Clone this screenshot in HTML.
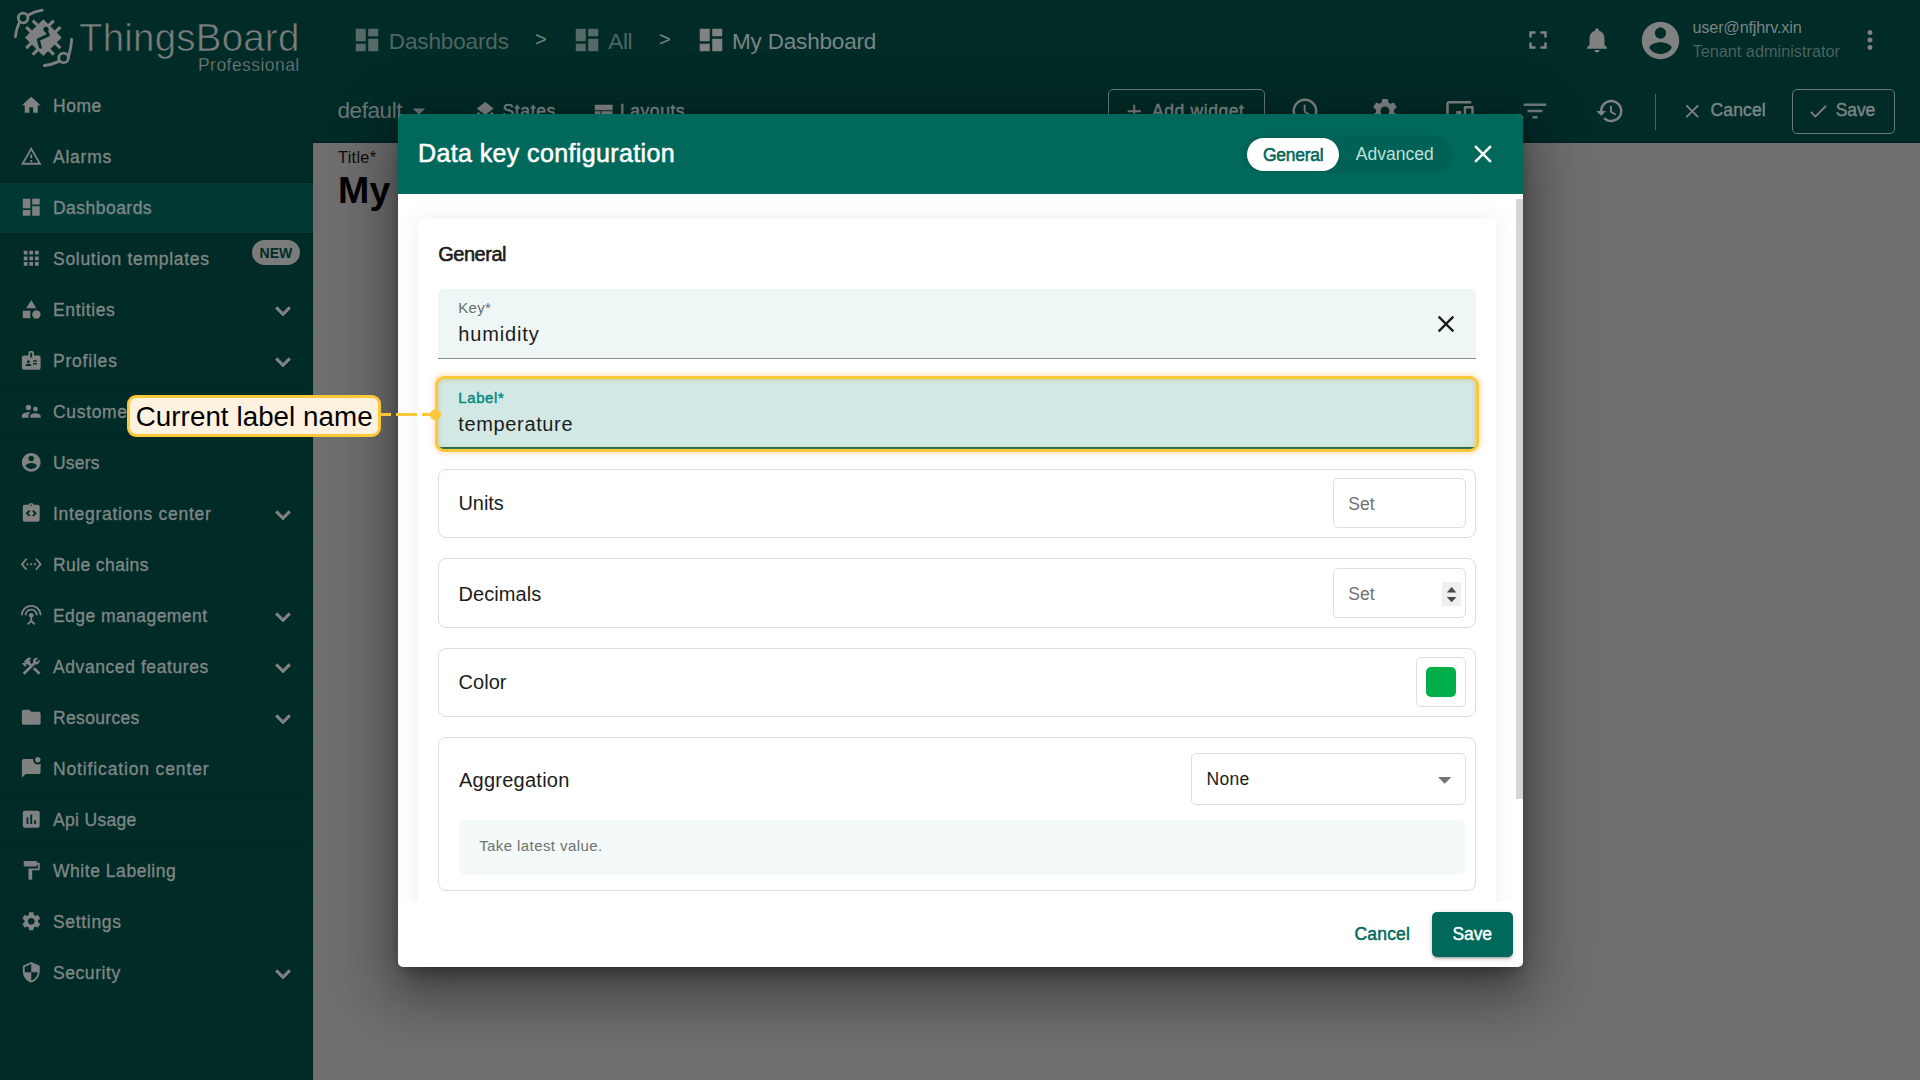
<!DOCTYPE html>
<html><head><meta charset="utf-8"><title>ThingsBoard</title>
<style>
*{box-sizing:border-box;margin:0;padding:0}
html,body{width:1920px;height:1080px;overflow:hidden;background:#6e6e6e;font-family:"Liberation Sans",sans-serif;}
.abs,.t{position:absolute}
.t{white-space:pre;line-height:1}
svg{display:block}
i{font-style:normal}
#side{position:absolute;left:0;top:0;width:313px;height:1080px;background:#002b27;box-shadow:inset -1px 0 0 #002621}
#top{position:absolute;left:313px;top:0;width:1607px;height:143px;background:#002b27;box-shadow:inset 0 -1.500px 0 #00241f}
.mi{position:absolute;left:0;width:313px;height:51px;border-top:1px solid #002521}
.mi.act{background:#003934}
.mi svg.ic{position:absolute;left:20px;top:13.400px;width:22.5px;height:22.5px;fill:#808282}
.mi span{position:absolute;left:53px;top:0;line-height:51px;font-size:17.5px;color:#7f8685;white-space:pre;-webkit-text-stroke:0.35px #7f8685;letter-spacing:0.3px}
.mi svg.ch{position:absolute;left:267.500px;top:10.500px;width:30px;height:30px;fill:#808282;stroke:#808282;stroke-width:.700px}
.mi .new{position:absolute;left:251.600px;top:5.900px;width:48.700px;height:25px;border-radius:13px;background:#7a7c7b;color:#002b27;font-size:14px;font-weight:bold;text-align:center;line-height:27px;letter-spacing:0}
.sb{-webkit-text-stroke:0.45px currentColor}
#modal{position:absolute;left:398px;top:114px;width:1125px;height:853px;background:#fff;border-radius:5px;box-shadow:0 14px 19px -9px rgba(0,0,0,.32),0 30px 47px 4px rgba(0,0,0,.22),0 11px 60px 14px rgba(0,0,0,.2),0 2px 10px rgba(0,0,0,.12)}
#mhead{position:absolute;left:0;top:0;width:1125px;height:80px;background:#00695c;border-radius:5px 5px 0 0}
#mscroll{position:absolute;left:0;top:80px;width:1118px;height:707px;overflow:hidden}
#panel{position:absolute;left:19.500px;top:24.800px;width:1078.300px;height:760px;background:#fff;border-radius:5px;box-shadow:0 0 20px 3px rgba(200,206,215,.27)}
.row{position:absolute;left:40px;width:1038px;border:1px solid #dedede;border-radius:8px}
.inp{position:absolute;border:1px solid #dedede;border-radius:5px;background:#fff}
#thumb{position:absolute;left:1118px;top:85px;width:7px;height:600px;background:#d5d5d5}

</style></head><body>
<div id="side">
<!-- logo -->
<svg class="abs" style="left:0;top:0" width="90" height="80" viewBox="0 0 90 80" fill="none" stroke="#7d807f" stroke-width="2.800" stroke-linecap="round">
<circle cx="23.100" cy="18" r="4.800"/><circle cx="63.600" cy="57.900" r="4.800"/>
<path d="M27.800 15.200 Q35 11.300 42.300 10.200"/><path d="M19.400 22.300 Q16 29.500 15.300 36.800"/>
<path d="M68.600 56.500 Q71.300 46.500 71.600 39.200"/><path d="M59 61.400 Q51.500 64.800 44.400 65.500"/>
<g transform="translate(43.300 37.600) rotate(45)" stroke="none" fill="#7d807f"><rect x="-13" y="-13" width="26" height="26"/>
<rect x="-6.200" y="-19.500" width="3.200" height="8"/><rect x="3" y="-19.500" width="3.200" height="8"/>
<rect x="-6.200" y="11.500" width="3.200" height="8"/><rect x="3" y="11.500" width="3.200" height="8"/>
<rect x="-19.500" y="-6.200" width="8" height="3.200"/><rect x="-19.500" y="3" width="8" height="3.200"/>
<rect x="11.500" y="-6.200" width="8" height="3.200"/><rect x="11.500" y="3" width="8" height="3.200"/></g>
<path d="M46 29.600 L48.300 35.200 L38.300 39.600 L40.400 47.300" stroke="#002b27" stroke-width="3" stroke-linejoin="round" fill="none"/><circle cx="46" cy="29.300" r="2.600" fill="#002b27" stroke="none"/>
</svg>
<span class="t" style="left:79px;top:18.500px;font-size:38.500px;color:#7a7e7d;-webkit-text-stroke:0.700px #002b27;letter-spacing:0.200px">ThingsBoard</span>
<span class="t" style="left:198px;top:57px;font-size:17.500px;color:#7a7e7d;-webkit-text-stroke:0.300px #002b27;letter-spacing:0.450px">Professional</span>

<div class="mi" style="top:80px"><svg class="ic" viewBox="0 0 24 24"><path d="M10 20v-6h4v6h5v-8h3L12 3 2 12h3v8z"/></svg><span style="letter-spacing:0.52px">Home</span></div>
<div class="mi" style="top:131px"><svg class="ic" viewBox="0 0 24 24"><path d="M12 5.99L19.53 19H4.47L12 5.99M12 2L1 21h22L12 2zm1 14h-2v2h2v-2zm0-6h-2v4h2v-4z"/></svg><span style="letter-spacing:0.76px">Alarms</span></div>
<div class="mi act" style="top:182px"><svg class="ic" viewBox="0 0 24 24"><path d="M3 13h8V3H3v10zm0 8h8v-6H3v6zm10 0h8V11h-8v10zm0-18v6h8V3h-8z"/></svg><span style="letter-spacing:0.47px">Dashboards</span></div>
<div class="mi" style="top:233px"><svg class="ic" viewBox="0 0 24 24"><path d="M4 8h4V4H4v4zm6 12h4v-4h-4v4zm-6 0h4v-4H4v4zm0-6h4v-4H4v4zm6 0h4v-4h-4v4zm6-10v4h4V4h-4zm-6 4h4V4h-4v4zm6 6h4v-4h-4v4zm0 6h4v-4h-4v4z"/></svg><span style="letter-spacing:0.71px">Solution templates</span><i class="new">NEW</i></div>
<div class="mi" style="top:284px"><svg class="ic" viewBox="0 0 24 24"><path d="M12 2l-5.500 9h11z"/><circle cx="17.5" cy="17.5" r="4.5"/><path d="M3 13.500h8v8H3z"/></svg><span style="letter-spacing:0.64px">Entities</span><svg class="ch" viewBox="0 0 24 24"><path d="M16.590 8.590L12 13.170 7.410 8.590 6 10l6 6 6-6z"/></svg></div>
<div class="mi" style="top:335px"><svg class="ic" viewBox="0 0 24 24"><path d="M20 7h-5V4c0-1.100-.900-2-2-2h-2c-1.100 0-2 .900-2 2v3H4c-1.100 0-2 .900-2 2v11c0 1.100.900 2 2 2h16c1.100 0 2-.900 2-2V9c0-1.100-.900-2-2-2zM9 12c.830 0 1.500.670 1.500 1.500S9.830 15 9 15s-1.500-.670-1.500-1.500S8.170 12 9 12zm3 6H6v-.750c0-1 2-1.500 3-1.500s3 .500 3 1.500V18zm1-9h-2V4h2v5zm5 7.500h-4V15h4v1.500zm0-3h-4V12h4v1.500z"/></svg><span style="letter-spacing:0.79px">Profiles</span><svg class="ch" viewBox="0 0 24 24"><path d="M16.590 8.590L12 13.170 7.410 8.590 6 10l6 6 6-6z"/></svg></div>
<div class="mi" style="top:386px"><svg class="ic" viewBox="0 0 24 24"><path d="M16.500 12c1.380 0 2.490-1.120 2.490-2.500S17.880 7 16.500 7C15.120 7 14 8.120 14 9.500s1.120 2.500 2.500 2.500zM9 11c1.660 0 2.990-1.340 2.990-3S10.660 5 9 5C7.340 5 6 6.340 6 8s1.340 3 3 3zm7.500 3c-1.830 0-5.500.920-5.500 2.750V19h11v-2.250c0-1.830-3.670-2.750-5.500-2.750zM9 13c-2.330 0-7 1.170-7 3.500V19h7v-2.250c0-.850.330-2.340 2.370-3.470C10.500 13.100 9.660 13 9 13z"/></svg><span style="letter-spacing:0.67px">Customers</span></div>
<div class="mi" style="top:437px"><svg class="ic" viewBox="0 0 24 24"><path d="M12 2C6.480 2 2 6.480 2 12s4.480 10 10 10 10-4.480 10-10S17.520 2 12 2zm0 3c1.660 0 3 1.340 3 3s-1.340 3-3 3-3-1.340-3-3 1.340-3 3-3zm0 14.200c-2.500 0-4.710-1.280-6-3.220.030-1.990 4-3.080 6-3.080 1.990 0 5.970 1.090 6 3.080-1.290 1.940-3.500 3.220-6 3.220z"/></svg><span style="letter-spacing:0.22px">Users</span></div>
<div class="mi" style="top:488px"><svg class="ic" viewBox="0 0 24 24"><path d="M19 3h-4.180C14.400 1.840 13.300 1 12 1s-2.400.840-2.820 2H5c-.140 0-.270.010-.400.040-.390.080-.740.280-1.010.550-.180.180-.330.400-.430.640-.100.230-.160.490-.160.770v14c0 .270.060.540.160.780s.250.450.430.640c.270.270.620.470 1.010.550.130.020.260.030.400.030h14c1.100 0 2-.900 2-2V5c0-1.100-.900-2-2-2zm-8 11.170l-1.410 1.420L6 12l3.590-3.590L11 9.830 8.830 12 11 14.170zm1-9.920c-.410 0-.750-.340-.750-.750s.340-.750.750-.750.750.340.750.750-.340.750-.750.750zm2.410 11.340L13 14.170 15.170 12 13 9.830l1.410-1.420L18 12l-3.590 3.590z"/></svg><span style="letter-spacing:0.71px">Integrations center</span><svg class="ch" viewBox="0 0 24 24"><path d="M16.590 8.590L12 13.170 7.410 8.590 6 10l6 6 6-6z"/></svg></div>
<div class="mi" style="top:539px"><svg class="ic" viewBox="0 0 24 24"><path d="M7.770 6.760L6.230 5.480.820 12l5.410 6.520 1.540-1.280L3.420 12l4.350-5.240zM7 13h2v-2H7v2zm10-2h-2v2h2v-2zm-6 2h2v-2h-2v2zm6.770-7.520l-1.540 1.280L20.580 12l-4.350 5.240 1.540 1.280L23.180 12l-5.410-6.520z"/></svg><span style="letter-spacing:0.4px">Rule chains</span></div>
<div class="mi" style="top:590px"><svg class="ic" viewBox="0 0 24 24"><path d="M12 5c-3.870 0-7 3.130-7 7h2c0-2.760 2.240-5 5-5s5 2.240 5 5h2c0-3.870-3.130-7-7-7zm1 9.290c.880-.390 1.500-1.260 1.500-2.290 0-1.380-1.120-2.500-2.500-2.500S9.500 10.620 9.500 12c0 1.020.620 1.900 1.500 2.290v3.300L7.590 21 9 22.410l3-3 3 3L16.410 21 13 17.590v-3.300zM12 1C5.930 1 1 5.930 1 12h2c0-4.970 4.030-9 9-9s9 4.030 9 9h2c0-6.070-4.930-11-11-11z"/></svg><span style="letter-spacing:0.44px">Edge management</span><svg class="ch" viewBox="0 0 24 24"><path d="M16.590 8.590L12 13.170 7.410 8.590 6 10l6 6 6-6z"/></svg></div>
<div class="mi" style="top:641px"><svg class="ic" viewBox="0 0 24 24"><rect x="16.34" y="12.87" width="3" height="8.49" transform="matrix(0.7071 -0.7071 0.7071 0.7071 -6.8779 17.6156)"/><path d="M17.500,10c1.930,0,3.500-1.570,3.500-3.500c0-0.580-0.160-1.120-0.410-1.600l-2.700,2.700L16.400,6.110l2.700-2.700C18.620,3.160,18.080,3,17.500,3 C15.570,3,14,4.570,14,6.500c0,0.410,0.080,0.800,0.210,1.160l-1.850,1.850l-1.780-1.780l0.710-0.710L9.880,5.610L12,3.490 c-1.170-1.170-3.070-1.170-4.240,0L4.220,7.030l1.410,1.410H2.810L2.100,9.150l3.540,3.540l0.710-0.710V9.150l1.410,1.410l0.710-0.710l1.780,1.780 l-7.410,7.410l2.120,2.120L16.340,9.790C16.700,9.920,17.090,10,17.500,10z"/></svg><span style="letter-spacing:0.58px">Advanced features</span><svg class="ch" viewBox="0 0 24 24"><path d="M16.590 8.590L12 13.170 7.410 8.590 6 10l6 6 6-6z"/></svg></div>
<div class="mi" style="top:692px"><svg class="ic" viewBox="0 0 24 24"><path d="M10 4H4c-1.100 0-1.990.900-1.990 2L2 18c0 1.100.900 2 2 2h16c1.100 0 2-.900 2-2V8c0-1.100-.900-2-2-2h-8l-2-2z"/></svg><span style="letter-spacing:0.34px">Resources</span><svg class="ch" viewBox="0 0 24 24"><path d="M16.590 8.590L12 13.170 7.410 8.590 6 10l6 6 6-6z"/></svg></div>
<div class="mi" style="top:743px"><svg class="ic" viewBox="0 0 24 24"><path d="M22 6.980V16c0 1.100-.900 2-2 2H6l-4 4V4c0-1.100.900-2 2-2h10.100c-.060.320-.100.660-.100 1 0 2.760 2.240 5 5 5 1.130 0 2.160-.390 3-1.020zM16 3c0 1.660 1.340 3 3 3s3-1.340 3-3-1.340-3-3-3-3 1.340-3 3z"/></svg><span style="letter-spacing:0.86px">Notification center</span></div>
<div class="mi" style="top:794px"><svg class="ic" viewBox="0 0 24 24"><path d="M19 3H5c-1.100 0-2 .900-2 2v14c0 1.100.900 2 2 2h14c1.100 0 2-.900 2-2V5c0-1.100-.900-2-2-2zM9 17H7v-7h2v7zm4 0h-2V7h2v10zm4 0h-2v-4h2v4z"/></svg><span style="letter-spacing:0.32px">Api Usage</span></div>
<div class="mi" style="top:845px"><svg class="ic" viewBox="0 0 24 24"><path d="M18 4V3c0-.550-.450-1-1-1H5c-.550 0-1 .450-1 1v4c0 .550.450 1 1 1h12c.550 0 1-.450 1-1V6h1v4H9v11c0 .550.450 1 1 1h2c.550 0 1-.450 1-1v-9h8V4h-3z"/></svg><span style="letter-spacing:0.54px">White Labeling</span></div>
<div class="mi" style="top:896px"><svg class="ic" viewBox="0 0 24 24"><path d="M19.140,12.940c0.040-0.300,0.060-0.610,0.060-0.940c0-0.320-0.020-0.640-0.070-0.940l2.030-1.580c0.180-0.140,0.230-0.410,0.120-0.610 l-1.920-3.320c-0.120-0.220-0.370-0.290-0.590-0.220l-2.390,0.960c-0.500-0.380-1.030-0.700-1.620-0.940L14.400,2.810c-0.040-0.240-0.240-0.410-0.480-0.410 h-3.840c-0.240,0-0.430,0.170-0.470,0.410L9.250,5.350C8.660,5.590,8.120,5.920,7.630,6.290L5.240,5.330c-0.220-0.080-0.470,0-0.590,0.220L2.740,8.870 C2.620,9.080,2.660,9.340,2.860,9.480l2.030,1.580C4.840,11.360,4.800,11.690,4.800,12s0.020,0.640,0.070,0.940l-2.030,1.580 c-0.180,0.140-0.230,0.410-0.120,0.610l1.920,3.320c0.120,0.220,0.370,0.290,0.590,0.220l2.390-0.960c0.500,0.380,1.030,0.700,1.620,0.940l0.360,2.540 c0.050,0.240,0.240,0.410,0.480,0.410h3.840c0.240,0,0.440-0.170,0.470-0.410l0.360-2.540c0.590-0.240,1.130-0.560,1.620-0.940l2.390,0.960 c0.220,0.080,0.470,0,0.590-0.220l1.920-3.320c0.120-0.220,0.070-0.470-0.120-0.610L19.140,12.940z M12,15.600c-1.980,0-3.600-1.620-3.600-3.600 s1.620-3.600,3.600-3.600s3.600,1.620,3.600,3.600S13.980,15.600,12,15.600z"/></svg><span style="letter-spacing:0.68px">Settings</span></div>
<div class="mi" style="top:947px"><svg class="ic" viewBox="0 0 24 24"><path d="M12 1L3 5v6c0 5.550 3.840 10.740 9 12 5.160-1.260 9-6.450 9-12V5l-9-4zm0 10.990h7c-.530 4.120-3.280 7.790-7 8.940V12H5V6.300l7-3.110v8.800z"/></svg><span style="letter-spacing:0.57px">Security</span><svg class="ch" viewBox="0 0 24 24"><path d="M16.590 8.590L12 13.170 7.410 8.590 6 10l6 6 6-6z"/></svg></div>
<div class="mi" style="top:998px;height:1px"></div>
</div>
<div id="top"></div>
<!-- page content behind -->
<span class="t" style="left:338px;top:148.900px;font-size:16.250px;letter-spacing:.320px;color:#0b0b0b">Title*</span>
<span class="t" style="left:338px;top:172px;font-size:37.500px;font-weight:bold;letter-spacing:.160px;color:#000">My</span>
<!-- breadcrumbs -->
<svg class="abs" style="left:352.250px;top:25.250px" width="30" height="30" viewBox="0 0 24 24" fill="#566b68"><path d="M3 13h8V3H3v10zm0 8h8v-6H3v6zm10 0h8V11h-8v10zm0-18v6h8V3h-8z"/></svg>
<span class="t" style="left:388.800px;top:31.400px;font-size:22.500px;letter-spacing:-.130px;color:#4f6663">Dashboards</span>
<span class="t" style="left:535px;top:29px;font-size:20px;color:#78837f">&gt;</span>
<svg class="abs" style="left:571.750px;top:25.250px" width="30" height="30" viewBox="0 0 24 24" fill="#566b68"><path d="M3 13h8V3H3v10zm0 8h8v-6H3v6zm10 0h8V11h-8v10zm0-18v6h8V3h-8z"/></svg>
<span class="t" style="left:608.300px;top:31.400px;font-size:22.500px;letter-spacing:-.410px;color:#4f6663">All</span>
<span class="t" style="left:659px;top:29px;font-size:20px;color:#78837f">&gt;</span>
<svg class="abs" style="left:695.500px;top:25.250px" width="30" height="30" viewBox="0 0 24 24" fill="#808282"><path d="M3 13h8V3H3v10zm0 8h8v-6H3v6zm10 0h8V11h-8v10zm0-18v6h8V3h-8z"/></svg>
<span class="t" style="left:732px;top:31.400px;font-size:22.500px;letter-spacing:-.180px;color:#7a8584">My Dashboard</span>
<!-- right icons -->
<svg class="abs" style="left:1522.500px;top:25.250px" width="30" height="30" viewBox="0 0 24 24" fill="#808282"><path d="M7 14H5v5h5v-2H7v-3zm-2-4h2V7h3V5H5v5zm12 7h-3v2h5v-5h-2v3zM14 5v2h3v3h2V5h-5z"/></svg>
<svg class="abs" style="left:1582.250px;top:24.900px" width="30" height="30" viewBox="0 0 24 24" fill="#808282"><path d="M12 22c1.100 0 2-.900 2-2h-4c0 1.100.890 2 2 2zm6-6v-5c0-3.070-1.640-5.640-4.500-6.320V4c0-.830-.670-1.500-1.500-1.500s-1.500.670-1.500 1.500v.680C7.630 5.360 6 7.920 6 11v5l-2 2v1h16v-1l-2-2z"/></svg>
<svg class="abs" style="left:1637.500px;top:18.100px" width="45" height="45" viewBox="0 0 24 24" fill="#808282"><path d="M12 2C6.480 2 2 6.480 2 12s4.480 10 10 10 10-4.480 10-10S17.520 2 12 2zm0 3c1.660 0 3 1.340 3 3s-1.340 3-3 3-3-1.340-3-3 1.340-3 3-3zm0 14.200c-2.500 0-4.710-1.280-6-3.220.030-1.990 4-3.080 6-3.080 1.990 0 5.970 1.090 6 3.080-1.290 1.940-3.500 3.220-6 3.220z"/></svg>
<span class="t" style="left:1692.500px;top:19.300px;font-size:16.250px;letter-spacing:-.190px;color:#7a8584">user@nfjhrv.xin</span>
<span class="t" style="left:1692.500px;top:42.800px;font-size:16.250px;letter-spacing:.010px;color:#4a625f">Tenant administrator</span>
<svg class="abs" style="left:1855px;top:25.250px" width="30" height="30" viewBox="0 0 24 24" fill="#808282"><path d="M12 8c1.100 0 2-.900 2-2s-.900-2-2-2-2 .900-2 2 .900 2 2 2zm0 2c-1.100 0-2 .900-2 2s.900 2 2 2 2-.900 2-2-.900-2-2-2zm0 6c-1.100 0-2 .900-2 2s.900 2 2 2 2-.900 2-2-.900-2-2-2z"/></svg>
<!-- dashboard toolbar -->
<span class="t" style="left:337.500px;top:100.300px;font-size:22.500px;letter-spacing:-.430px;color:#6b7775">default</span>
<svg class="abs" style="left:404px;top:96px" width="30" height="30" viewBox="0 0 24 24" fill="#6b7775"><path d="M7 10l5 5 5-5z"/></svg>
<svg class="abs" style="left:473.500px;top:99.500px" width="22.500" height="22.500" viewBox="0 0 24 24" fill="#808282"><path d="M11.990 18.540l-7.370-5.730L3 14.070l9 7 9-7-1.630-1.270-7.380 5.740zM12 16l7.360-5.730L21 9l-9-7-9 7 1.630 1.270L12 16z"/></svg>
<span class="t sb" style="left:502.500px;top:102.600px;font-size:17.500px;letter-spacing:.650px;color:#7a8584">States</span>
<svg class="abs" style="left:591.500px;top:99.500px" width="22.500" height="22.500" viewBox="0 0 24 24" fill="#808282"><path d="M3 19h6v-7H3v7zm7 0h12v-7H10v7zM3 5v6h19V5H3z"/></svg>
<span class="t sb" style="left:620px;top:102.600px;font-size:17.500px;letter-spacing:.550px;color:#7a8584">Layouts</span>
<div class="abs" style="left:1108px;top:88.700px;width:156.500px;height:45px;border:1px solid #6c7977;border-radius:5px"></div>
<svg class="abs" style="left:1122.500px;top:99.800px" width="22.500" height="22.500" viewBox="0 0 24 24" fill="#808282"><path d="M19 13h-6v6h-2v-6H5v-2h6V5h2v6h6v2z"/></svg>
<span class="t sb" style="left:1152px;top:102.600px;font-size:17.500px;letter-spacing:.600px;color:#7a8584">Add widget</span>
<svg class="abs" style="left:1290px;top:96px" width="30" height="30" viewBox="0 0 24 24" fill="#808282"><path d="M11.990 2C6.470 2 2 6.480 2 12s4.470 10 9.990 10C17.520 22 22 17.520 22 12S17.520 2 11.990 2zM12 20c-4.420 0-8-3.580-8-8s3.580-8 8-8 8 3.580 8 8-3.580 8-8 8zm.500-13H11v6l5.250 3.150.750-1.230-4.500-2.670z"/></svg>
<svg class="abs" style="left:1370px;top:96px" width="30" height="30" viewBox="0 0 24 24" fill="#808282"><path d="M19.140,12.940c0.040-0.300,0.060-0.610,0.060-0.940c0-0.320-0.020-0.640-0.070-0.940l2.030-1.580c0.180-0.140,0.230-0.410,0.120-0.610 l-1.920-3.320c-0.120-0.220-0.370-0.290-0.590-0.220l-2.390,0.960c-0.500-0.380-1.030-0.700-1.620-0.940L14.400,2.810c-0.040-0.240-0.240-0.410-0.480-0.410 h-3.840c-0.240,0-0.430,0.170-0.470,0.410L9.250,5.350C8.660,5.590,8.120,5.920,7.630,6.290L5.240,5.330c-0.220-0.080-0.470,0-0.590,0.220L2.740,8.870 C2.620,9.080,2.660,9.340,2.860,9.480l2.030,1.580C4.840,11.360,4.800,11.690,4.800,12s0.020,0.640,0.070,0.940l-2.030,1.580 c-0.180,0.140-0.230,0.410-0.120,0.610l1.920,3.320c0.120,0.220,0.370,0.290,0.590,0.220l2.390-0.960c0.500,0.380,1.030,0.700,1.620,0.940l0.360,2.540 c0.050,0.240,0.240,0.410,0.480,0.410h3.840c0.240,0,0.440-0.170,0.470-0.410l0.360-2.540c0.590-0.240,1.130-0.560,1.620-0.940l2.390,0.960 c0.220,0.080,0.470,0,0.590-0.220l1.920-3.320c0.120-0.220,0.070-0.470-0.120-0.610L19.140,12.940z M12,15.600c-1.980,0-3.600-1.620-3.600-3.600 s1.620-3.600,3.600-3.600s3.600,1.620,3.600,3.600S13.980,15.600,12,15.600z"/></svg>
<svg class="abs" style="left:1445px;top:96px" width="30" height="30" viewBox="0 0 24 24" fill="#808282"><path d="M3 6h18V4H3c-1.100 0-2 .900-2 2v12c0 1.100.900 2 2 2h4v-2H3V6zm10 6H9v1.780c-.610.550-1 1.330-1 2.220s.390 1.670 1 2.220V20h4v-1.780c.610-.550 1-1.340 1-2.220s-.390-1.670-1-2.220V12zm-2 5.500c-.830 0-1.500-.670-1.500-1.500s.670-1.500 1.500-1.500 1.500.670 1.500 1.500-.670 1.500-1.500 1.500zM22 8h-6c-.500 0-1 .500-1 1v10c0 .500.500 1 1 1h6c.500 0 1-.500 1-1V9c0-.500-.500-1-1-1zm-1 10h-4v-8h4v8z"/></svg>
<svg class="abs" style="left:1520px;top:95.500px" width="30" height="30" viewBox="0 0 24 24" fill="#6f7c7a"><path d="M10 18h4v-2h-4v2zM3 6v2h18V6H3zm3 7h12v-2H6v2z"/></svg>
<svg class="abs" style="left:1594.500px;top:96px" width="30" height="30" viewBox="0 0 24 24" fill="#808282"><path d="M13 3c-4.970 0-9 4.030-9 9H1l3.890 3.890.070.140L9 12H6c0-3.870 3.130-7 7-7s7 3.130 7 7-3.130 7-7 7c-1.930 0-3.680-.790-4.940-2.060l-1.420 1.420C8.270 19.990 10.510 21 13 21c4.970 0 9-4.030 9-9s-4.030-9-9-9zm-1 5v5l4.280 2.540.720-1.210-3.500-2.080V8H12z"/></svg>
<div class="abs" style="left:1655px;top:93.500px;width:1px;height:36.500px;background:#50625f"></div>
<svg class="abs" style="left:1681.250px;top:99.800px" width="22.500" height="22.500" viewBox="0 0 24 24" fill="#808282"><path d="M19 6.410L17.590 5 12 10.590 6.410 5 5 6.410 10.590 12 5 17.590 6.410 19 12 13.410 17.590 19 19 17.590 13.410 12z"/></svg>
<span class="t sb" style="left:1710.500px;top:102.300px;font-size:17.500px;letter-spacing:.150px;color:#7a8584">Cancel</span>
<div class="abs" style="left:1792px;top:89.300px;width:102.500px;height:44.500px;border:1px solid #6c7977;border-radius:5px"></div>
<svg class="abs" style="left:1806.500px;top:99.500px" width="22.500" height="22.500" viewBox="0 0 24 24" fill="#808282"><path d="M9 16.170L4.830 12l-1.420 1.410L9 19 21 7l-1.410-1.410z"/></svg>
<span class="t sb" style="left:1835.750px;top:102.300px;font-size:17.500px;letter-spacing:-.100px;color:#7a8584">Save</span>

<!-- modal -->
<div id="modal">
<div id="mhead"></div>
<span class="t" style="left:20px;top:26.840px;font-size:25px;letter-spacing:.380px;color:#fff;-webkit-text-stroke:.550px #fff">Data key configuration</span>
<div class="abs" style="left:845px;top:20.500px;width:209px;height:38.500px;border-radius:20px;background:#006156"></div>
<div class="abs" style="left:849px;top:24px;width:92px;height:33px;border-radius:17px;background:#fff"></div>
<span class="t" style="left:865px;top:33px;font-size:17.500px;letter-spacing:-.260px;color:#00695c;-webkit-text-stroke:.550px #00695c">General</span>
<span class="t" style="left:957.800px;top:32.400px;font-size:17.500px;letter-spacing:.010px;color:#bfe0db">Advanced</span>
<svg class="abs" style="left:1069.500px;top:25px" width="30" height="30" viewBox="0 0 24 24" fill="#fff"><path d="M19 6.410L17.590 5 12 10.590 6.410 5 5 6.410 10.590 12 5 17.590 6.410 19 12 13.410 17.590 19 19 17.590 13.410 12z"/></svg>
<div id="mscroll">
<div id="panel"></div>
<span class="t" style="left:40.300px;top:49.870px;font-size:20px;letter-spacing:-.500px;color:#1a1a1a;-webkit-text-stroke:.550px #1a1a1a">General</span>
<!-- key -->
<div class="abs" style="left:40px;top:95px;width:1038px;height:70px;background:#eef7f5;border-bottom:1px solid #8a8f8e;border-radius:5px 5px 0 0"></div>
<span class="t" style="left:60.300px;top:105.500px;font-size:15px;letter-spacing:.270px;color:#6a6f6e">Key*</span>
<span class="t" style="left:60.300px;top:129.870px;font-size:20px;letter-spacing:.850px;color:#1c1c1c">humidity</span>
<svg class="abs" style="left:1034px;top:116px" width="28" height="28" viewBox="0 0 24 24" fill="#1c1c1c"><path d="M19 6.410L17.590 5 12 10.590 6.410 5 5 6.410 10.590 12 5 17.590 6.410 19 12 13.410 17.590 19 19 17.590 13.410 12z"/></svg>
<!-- label -->
<div class="abs" style="left:40px;top:185.300px;width:1038px;height:69.500px;background:#d2e8e5;border-bottom:2px solid #005b4e;border-radius:5px 5px 0 0"></div>
<span class="t" style="left:60.300px;top:195.500px;font-size:15px;letter-spacing:.590px;color:#00897b;-webkit-text-stroke:.400px #00897b">Label*</span>
<span class="t" style="left:60.300px;top:219.570px;font-size:20px;letter-spacing:.640px;color:#1c1c1c">temperature</span>
<div class="abs" style="left:37px;top:182px;width:1044px;height:75.500px;border:3px solid #fcc738;border-radius:9px;box-shadow:0 0 5px 2px rgba(255,190,95,.38),inset 0 0 4px 1px rgba(205,175,85,.45)"></div>
<!-- units -->
<div class="row" style="top:275px;height:69px"></div>
<span class="t" style="left:60.500px;top:298.770px;font-size:20px;letter-spacing:-.070px;color:#1c1c1c">Units</span>
<div class="inp" style="left:935px;top:284px;width:133px;height:50px"></div>
<span class="t" style="left:950.300px;top:301.900px;font-size:17.500px;letter-spacing:.060px;color:#727272">Set</span>
<!-- decimals -->
<div class="row" style="top:364px;height:70px"></div>
<span class="t" style="left:60.500px;top:389.600px;font-size:20px;letter-spacing:.080px;color:#1c1c1c">Decimals</span>
<div class="inp" style="left:935px;top:374px;width:133px;height:49.500px"></div>
<span class="t" style="left:950.300px;top:391.900px;font-size:17.500px;letter-spacing:.060px;color:#727272">Set</span>
<div class="abs" style="left:1044px;top:388px;width:19px;height:24px;background:#efefef"></div>
<svg class="abs" style="left:1044px;top:388px" width="19" height="24" viewBox="0 0 19 24" fill="#4a4a4a"><path d="M4.800 10.500 L9.600 5 L14.400 10.500z M4.800 15 L14.400 15 L9.600 20.200z"/></svg>
<!-- color -->
<div class="row" style="top:454px;height:69px"></div>
<span class="t" style="left:60.500px;top:477.570px;font-size:20px;letter-spacing:.050px;color:#1c1c1c">Color</span>
<div class="inp" style="left:1018.200px;top:463px;width:49.800px;height:50px"></div>
<div class="abs" style="left:1027.800px;top:472.700px;width:30.400px;height:30.500px;border-radius:5px;background:#00ae4a"></div>
<!-- aggregation -->
<div class="row" style="top:543px;height:154px"></div>
<span class="t" style="left:61px;top:575.800px;font-size:20px;letter-spacing:.250px;color:#1c1c1c">Aggregation</span>
<div class="inp" style="left:793px;top:559.300px;width:275px;height:51.500px"></div>
<span class="t" style="left:808.600px;top:577.400px;font-size:17.500px;letter-spacing:.250px;color:#1c1c1c">None</span>
<svg class="abs" style="left:1040.300px;top:583px" width="13.400" height="6.700" viewBox="0 0 10 5" fill="#757575"><path d="M0 0l5 5 5-5z"/></svg>
<div class="abs" style="left:60.500px;top:626px;width:1006.800px;height:54.700px;border-radius:7px;background:#f4f9f9"></div>
<span class="t" style="left:81.200px;top:644.300px;font-size:15px;letter-spacing:.410px;color:#6e7271">Take latest value.</span>
</div>
<div id="thumb"></div>
<!-- footer -->
<span class="t" style="left:956.400px;top:812.100px;font-size:17.500px;letter-spacing:.220px;color:#00695c;-webkit-text-stroke:.450px #00695c">Cancel</span>
<div class="abs" style="left:1034px;top:798px;width:81px;height:45px;border-radius:5px;background:#00695c;box-shadow:0 3px 2px -2px rgba(0,0,0,.2),0 2px 3px rgba(0,0,0,.14),0 1px 6px rgba(0,0,0,.12)"></div>
<span class="t" style="left:1054.500px;top:812.100px;font-size:17.500px;letter-spacing:-.100px;color:#fff;-webkit-text-stroke:.400px #fff">Save</span>
</div>

<!-- callout -->
<svg class="abs" style="left:375px;top:400px" width="80" height="30" viewBox="0 0 80 30"><line x1="6" y1="14.600" x2="61" y2="14.600" stroke="#fcc738" stroke-width="3" stroke-dasharray="21 5" stroke-dashoffset="11"/><circle cx="60.500" cy="14.700" r="5.500" fill="#fcc738"/></svg>
<div class="abs" style="left:127.250px;top:395px;width:254px;height:42px;border:3px solid #fcc738;border-radius:9px;background:#fdf1e0"></div>
<span class="t" style="left:135.700px;top:402.500px;font-size:27.750px;letter-spacing:.060px;color:#000">Current label name</span>


</body></html>
